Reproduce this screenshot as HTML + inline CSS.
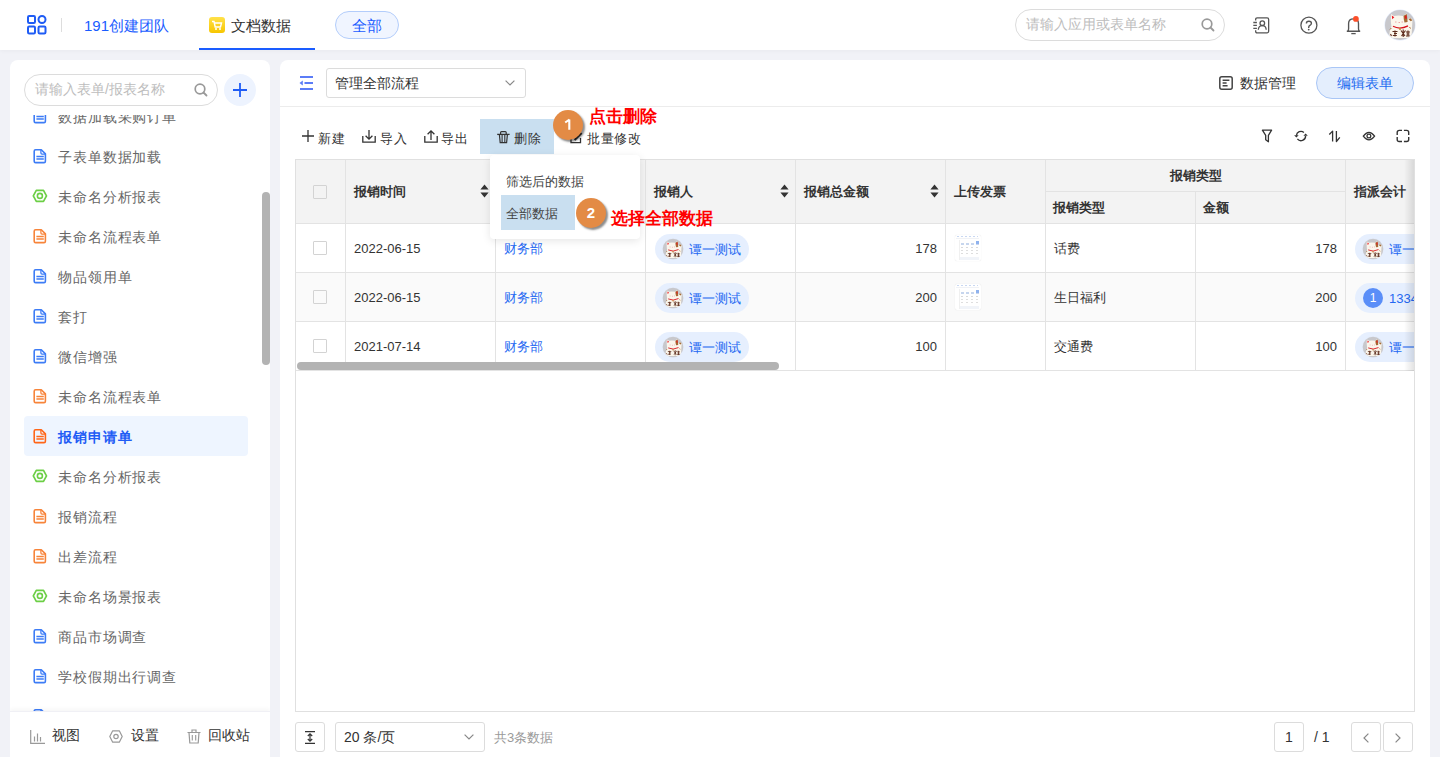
<!DOCTYPE html>
<html><head><meta charset="utf-8">
<style>
*{box-sizing:border-box;margin:0;padding:0}
html,body{width:1440px;height:757px;overflow:hidden}
body{position:relative;background:#f1f2f7;font-family:"Liberation Sans",sans-serif;color:#333;font-size:14px}
.abs{position:absolute}
.t{position:absolute;white-space:nowrap;line-height:1}
svg{position:absolute;overflow:visible}
/* header */
#hdr{position:absolute;left:0;top:0;width:1440px;height:50px;background:#fff;box-shadow:0 1px 4px rgba(0,0,0,.04)}
/* sidebar */
#side{position:absolute;left:10px;top:60px;width:260px;height:697px;background:#fff;border-radius:8px 8px 0 0;overflow:hidden}
.item{position:absolute;left:14px;width:224px;height:40px}
.item .tx{position:absolute;left:34px;top:13px;font-size:14px;letter-spacing:0.9px;line-height:16px;color:#666;white-space:nowrap}
.item svg{left:9px;top:13px}
/* main */
#main{position:absolute;left:280px;top:60px;width:1150px;height:697px;background:#fff;border-radius:8px 8px 0 0}
.cell{position:absolute;border-right:1px solid #e3e3e3;border-bottom:1px solid #e3e3e3;overflow:hidden}
.circ{width:30px;height:30px;border-radius:50%;background:#e38b45;color:#fff;font-weight:bold;font-size:15px;line-height:30px;text-align:center;box-shadow:2px 2px 2px rgba(0,0,0,.45)}
.red{color:#f00;font-size:16.5px;font-weight:bold}
.tag{width:94px;height:30px;border-radius:15px;background:#e6effe}
.av{width:20px;height:20px;border-radius:50%;background:radial-gradient(circle at 50% 45%,#f4ede6 0 45%,#c9a98d 46% 60%,#bdbdbd 61%)}
.thumb{width:26px;height:26px;border-radius:2px;background:#fff;box-shadow:0 0 1px rgba(0,0,0,.15);overflow:hidden}
.hd{font-weight:bold;font-size:13px;color:#333}
</style></head><body>
<svg width="0" height="0" style="position:absolute"><defs>
<clipPath id="avc"><circle cx="16" cy="16" r="15"/></clipPath>
<symbol id="cat" viewBox="0 0 32 32">
    <circle cx="16" cy="16" r="15.6" fill="#e3ebfb"/>
    <circle cx="16" cy="16" r="15" fill="#c8c8cc"/>
    <g clip-path="url(#avc)">
    <path d="M7 5 L10 7 Q14.5 6 19 7 L22.5 4.5 L23.5 12 L24 10 L26.5 9 L28.5 11 L28 19 L27.5 29 L5.5 29 Q5 22 7.5 17.5 Q6.5 13 7 5 Z" fill="#fbf6ec"/>
    <path d="M7.8 6.5 L10.3 8.2 L8.2 10.3 Z" fill="#ec1c24"/>
    <path d="M19.5 6.8 L22.8 5 L23.6 13 L20.5 13.5 Q19.5 10 19.5 6.8 Z" fill="#a46a34"/>
    <path d="M20.8 7.3 L22.4 6.3 L22.8 10 L21 9.2 Z" fill="#e8141e"/>
    <path d="M24.5 10.2 L26.5 9.2 L28.3 11.2 L26.8 12.3 Z" fill="#a46a34"/>
    <path d="M9 17.3 Q16 21 24 16.8" fill="none" stroke="#d8121c" stroke-width="1.3"/>
    <rect x="15.2" y="18.8" width="1.6" height="2.2" fill="#c08a3a"/>
    <path d="M11 13 H12.5 M14.5 13.5 H16 M17.5 13 H19" stroke="#e9a0a0" stroke-width="0.9"/>
    <path d="M8.5 22.5 H13.5 M10 24.5 H13 M8.8 26.5 L12.8 26.5 M11 21.5 V27.5 M6.5 25 L7.5 27" stroke="#5b2a1c" stroke-width="1.1"/>
    <path d="M17 21.5 L21 27 M21.5 21.5 L17.5 27 M19.2 20.5 V28 M22 23 H26 M22.5 25 H25.5 M22 27 H26 M24 21.5 V27.5" stroke="#5b2a1c" stroke-width="1.1"/>
    <path d="M6 20.5 L7.3 19 M26.5 19.5 L25.5 18" stroke="#a46a34" stroke-width="1"/>
    </g>
</symbol>
</defs></svg>

<div id="hdr">
  <!-- grid icon -->
  <svg style="left:27px;top:15px" width="20" height="20" viewBox="0 0 20 20">
    <rect x="1" y="1" width="7" height="7" rx="1.2" fill="none" stroke="#1f5cf5" stroke-width="2"/>
    <rect x="11.5" y="1" width="7" height="7" rx="3.5" fill="none" stroke="#1f5cf5" stroke-width="2"/>
    <rect x="1" y="11.5" width="7" height="7" rx="1.2" fill="none" stroke="#1f5cf5" stroke-width="2"/>
    <rect x="11.5" y="11.5" width="7" height="7" rx="1.2" fill="none" stroke="#1f5cf5" stroke-width="2"/>
  </svg>
  <div class="abs" style="left:61px;top:18px;width:1px;height:14px;background:#ddd"></div>
  <div class="t" style="left:84px;top:18px;font-size:15px;color:#1a5cff">191创建团队</div>
  <!-- tab -->
  <div class="abs" style="left:209px;top:17px;width:16px;height:16px;border-radius:3px;background:linear-gradient(#ffe14a,#f7c600)"></div>
  <svg style="left:211px;top:20px" width="12" height="11" viewBox="0 0 12 11">
    <path d="M1 1.5 L3 1.5 L4.2 7 L9.5 7 L10.5 3 L3.6 3" fill="none" stroke="#fff" stroke-width="1.4"/>
    <circle cx="5" cy="9" r="1" fill="#fff"/><circle cx="9" cy="9" r="1" fill="#fff"/>
  </svg>
  <div class="t" style="left:231px;top:18px;font-size:15px;color:#333">文档数据</div>
  <div class="abs" style="left:199px;top:48px;width:116px;height:2px;background:#1a5cff"></div>
  <div class="abs" style="left:335px;top:11px;width:64px;height:28px;border-radius:14px;background:#f0f5ff;border:1px solid #b3cdfb"></div>
  <div class="t" style="left:352px;top:18px;font-size:15px;color:#1a5cff">全部</div>
  <!-- search -->
  <div class="abs" style="left:1015px;top:9px;width:210px;height:32px;border-radius:16px;border:1px solid #dcdcdc"></div>
  <div class="t" style="left:1026px;top:17px;font-size:14px;color:#bdbdbd">请输入应用或表单名称</div>
  <svg style="left:1201px;top:18px" width="14" height="14" viewBox="0 0 14 14">
    <circle cx="6" cy="6" r="4.8" fill="none" stroke="#999" stroke-width="1.7"/>
    <path d="M9.5 9.5 L12.5 12.5" stroke="#999" stroke-width="1.8" stroke-linecap="round"/>
  </svg>
  <!-- contacts icon -->
  <svg style="left:1253px;top:16px" width="18" height="18" viewBox="0 0 18 18">
    <path d="M2.65 4.6 V3.45 Q2.65 1.95 4.15 1.95 H14.15 Q15.65 1.95 15.65 3.45 V15.35 Q15.65 16.85 14.15 16.85 H4.15 Q2.65 16.85 2.65 15.35 V14.2" fill="none" stroke="#555" stroke-width="1.3"/>
    <path d="M0.3 6.5 H3.9 M0.3 9.4 H3.9 M0.3 12.3 H3.9" stroke="#555" stroke-width="1.3"/>
    <circle cx="9.3" cy="7.2" r="2.3" fill="none" stroke="#555" stroke-width="1.3"/>
    <path d="M5.3 13.8 Q5.6 9.7 9.3 9.7 Q13 9.7 13.2 13.8" fill="none" stroke="#555" stroke-width="1.3"/>
  </svg>
  <!-- question -->
  <svg style="left:1300px;top:16px" width="18" height="18" viewBox="0 0 18 18">
    <circle cx="8.9" cy="9.2" r="8" fill="none" stroke="#555" stroke-width="1.3"/>
    <path d="M6.4 7.4 Q6.4 5.3 8.9 5.3 Q11.4 5.3 11.4 7.2 Q11.4 8.6 9.9 9.4 Q8.7 10.1 8.7 11.4 V12" fill="none" stroke="#555" stroke-width="1.4"/>
    <circle cx="8.7" cy="13.6" r="0.9" fill="#555"/>
  </svg>
  <!-- bell -->
  <svg style="left:1346px;top:15px" width="16" height="20" viewBox="0 0 16 20">
    <path d="M0.8 16.2 H14.2 M1.8 16.2 Q2.6 15.3 2.6 13.8 V8.6 Q2.6 3.9 7.5 3.9 Q12.5 3.9 12.5 8.6 V13.8 Q12.5 15.3 13.3 16.2" fill="none" stroke="#555" stroke-width="1.35"/>
    <path d="M5.3 18.6 H9.7" stroke="#555" stroke-width="1.3"/>
    <circle cx="9.9" cy="3.9" r="2.9" fill="#fb4f2a"/>
  </svg>
  <!-- avatar -->
  <svg style="left:1384px;top:9px" width="32" height="32" viewBox="0 0 32 32"><use href="#cat"/></svg>
</div>

<!-- SIDEBAR -->
<div id="side">
  <div class="abs" style="left:14px;top:14px;width:194px;height:32px;border-radius:16px;border:1px solid #dcdcdc"></div>
  <div class="t" style="left:25px;top:22px;font-size:14px;color:#bdbdbd">请输入表单/报表名称</div>
  <svg style="left:184px;top:23px" width="14" height="14" viewBox="0 0 14 14">
    <circle cx="6" cy="6" r="4.8" fill="none" stroke="#999" stroke-width="1.7"/>
    <path d="M9.5 9.5 L12.5 12.5" stroke="#999" stroke-width="1.8" stroke-linecap="round"/>
  </svg>
  <div class="abs" style="left:214px;top:14px;width:32px;height:32px;border-radius:50%;background:#edf3fe"></div>
  <svg style="left:222px;top:22px" width="16" height="16" viewBox="0 0 16 16">
    <path d="M8 1 V15 M1 8 H15" stroke="#1f5cf5" stroke-width="1.8"/>
  </svg>
  <div id="list" class="abs" style="left:0;top:55px;width:260px;height:596px;overflow:hidden">
    <div class="item" style="top:-19px"><svg width="14" height="15" viewBox="0 0 14 15"><path d="M1.2 2.2 Q1.2 0.8 2.6 0.8 H8.3 L12.4 4.9 V12.2 Q12.4 13.6 11 13.6 H2.6 Q1.2 13.6 1.2 12.2 Z" fill="none" stroke="#3d7cf6" stroke-width="1.6" stroke-linejoin="round"/><path d="M7.9 1 V4 Q7.9 5.1 9 5.1 H12.2" fill="none" stroke="#3d7cf6" stroke-width="1.3"/><path d="M3.4 7.6 H10.8 M3.4 10.1 H10.8" stroke="#3d7cf6" stroke-width="1.5"/></svg><div class="tx">数据加载采购订单</div></div>
    <div class="item" style="top:21px"><svg width="14" height="15" viewBox="0 0 14 15"><path d="M1.2 2.2 Q1.2 0.8 2.6 0.8 H8.3 L12.4 4.9 V12.2 Q12.4 13.6 11 13.6 H2.6 Q1.2 13.6 1.2 12.2 Z" fill="none" stroke="#3d7cf6" stroke-width="1.6" stroke-linejoin="round"/><path d="M7.9 1 V4 Q7.9 5.1 9 5.1 H12.2" fill="none" stroke="#3d7cf6" stroke-width="1.3"/><path d="M3.4 7.6 H10.8 M3.4 10.1 H10.8" stroke="#3d7cf6" stroke-width="1.5"/></svg><div class="tx">子表单数据加载</div></div>
    <div class="item" style="top:61px"><svg style="left:8px" width="16" height="14" viewBox="0 0 16 14"><path d="M1.3 6.9 L4.3 1.45 H11.5 L14.5 6.9 L11.5 12.4 H4.3 Z" fill="none" stroke="#6ccf46" stroke-width="1.7" stroke-linejoin="round"/><circle cx="7.9" cy="6.9" r="2.5" fill="none" stroke="#6ccf46" stroke-width="1.6"/></svg><div class="tx">未命名分析报表</div></div>
    <div class="item" style="top:101px"><svg width="14" height="15" viewBox="0 0 14 15"><path d="M1.2 2.2 Q1.2 0.8 2.6 0.8 H8.3 L12.4 4.9 V12.2 Q12.4 13.6 11 13.6 H2.6 Q1.2 13.6 1.2 12.2 Z" fill="none" stroke="#f7843a" stroke-width="1.6" stroke-linejoin="round"/><path d="M7.9 1 V4 Q7.9 5.1 9 5.1 H12.2" fill="none" stroke="#f7843a" stroke-width="1.3"/><path d="M3.4 7.6 H10.8 M3.4 10.1 H10.8" stroke="#f7843a" stroke-width="1.5"/></svg><div class="tx">未命名流程表单</div></div>
    <div class="item" style="top:141px"><svg width="14" height="15" viewBox="0 0 14 15"><path d="M1.2 2.2 Q1.2 0.8 2.6 0.8 H8.3 L12.4 4.9 V12.2 Q12.4 13.6 11 13.6 H2.6 Q1.2 13.6 1.2 12.2 Z" fill="none" stroke="#3d7cf6" stroke-width="1.6" stroke-linejoin="round"/><path d="M7.9 1 V4 Q7.9 5.1 9 5.1 H12.2" fill="none" stroke="#3d7cf6" stroke-width="1.3"/><path d="M3.4 7.6 H10.8 M3.4 10.1 H10.8" stroke="#3d7cf6" stroke-width="1.5"/></svg><div class="tx">物品领用单</div></div>
    <div class="item" style="top:181px"><svg width="14" height="15" viewBox="0 0 14 15"><path d="M1.2 2.2 Q1.2 0.8 2.6 0.8 H8.3 L12.4 4.9 V12.2 Q12.4 13.6 11 13.6 H2.6 Q1.2 13.6 1.2 12.2 Z" fill="none" stroke="#3d7cf6" stroke-width="1.6" stroke-linejoin="round"/><path d="M7.9 1 V4 Q7.9 5.1 9 5.1 H12.2" fill="none" stroke="#3d7cf6" stroke-width="1.3"/><path d="M3.4 7.6 H10.8 M3.4 10.1 H10.8" stroke="#3d7cf6" stroke-width="1.5"/></svg><div class="tx">套打</div></div>
    <div class="item" style="top:221px"><svg width="14" height="15" viewBox="0 0 14 15"><path d="M1.2 2.2 Q1.2 0.8 2.6 0.8 H8.3 L12.4 4.9 V12.2 Q12.4 13.6 11 13.6 H2.6 Q1.2 13.6 1.2 12.2 Z" fill="none" stroke="#3d7cf6" stroke-width="1.6" stroke-linejoin="round"/><path d="M7.9 1 V4 Q7.9 5.1 9 5.1 H12.2" fill="none" stroke="#3d7cf6" stroke-width="1.3"/><path d="M3.4 7.6 H10.8 M3.4 10.1 H10.8" stroke="#3d7cf6" stroke-width="1.5"/></svg><div class="tx">微信增强</div></div>
    <div class="item" style="top:261px"><svg width="14" height="15" viewBox="0 0 14 15"><path d="M1.2 2.2 Q1.2 0.8 2.6 0.8 H8.3 L12.4 4.9 V12.2 Q12.4 13.6 11 13.6 H2.6 Q1.2 13.6 1.2 12.2 Z" fill="none" stroke="#f7843a" stroke-width="1.6" stroke-linejoin="round"/><path d="M7.9 1 V4 Q7.9 5.1 9 5.1 H12.2" fill="none" stroke="#f7843a" stroke-width="1.3"/><path d="M3.4 7.6 H10.8 M3.4 10.1 H10.8" stroke="#f7843a" stroke-width="1.5"/></svg><div class="tx">未命名流程表单</div></div>
    <div class="item" style="top:301px;background:#eef5ff;border-radius:4px"><svg width="14" height="15" viewBox="0 0 14 15"><path d="M1.2 2.2 Q1.2 0.8 2.6 0.8 H8.3 L12.4 4.9 V12.2 Q12.4 13.6 11 13.6 H2.6 Q1.2 13.6 1.2 12.2 Z" fill="none" stroke="#ff6619" stroke-width="1.6" stroke-linejoin="round"/><path d="M7.9 1 V4 Q7.9 5.1 9 5.1 H12.2" fill="none" stroke="#ff6619" stroke-width="1.3"/><path d="M3.4 7.6 H10.8 M3.4 10.1 H10.8" stroke="#ff6619" stroke-width="1.5"/></svg><div class="tx" style="color:#1f5cf5;font-weight:bold">报销申请单</div></div>
    <div class="item" style="top:341px"><svg style="left:8px" width="16" height="14" viewBox="0 0 16 14"><path d="M1.3 6.9 L4.3 1.45 H11.5 L14.5 6.9 L11.5 12.4 H4.3 Z" fill="none" stroke="#6ccf46" stroke-width="1.7" stroke-linejoin="round"/><circle cx="7.9" cy="6.9" r="2.5" fill="none" stroke="#6ccf46" stroke-width="1.6"/></svg><div class="tx">未命名分析报表</div></div>
    <div class="item" style="top:381px"><svg width="14" height="15" viewBox="0 0 14 15"><path d="M1.2 2.2 Q1.2 0.8 2.6 0.8 H8.3 L12.4 4.9 V12.2 Q12.4 13.6 11 13.6 H2.6 Q1.2 13.6 1.2 12.2 Z" fill="none" stroke="#f7843a" stroke-width="1.6" stroke-linejoin="round"/><path d="M7.9 1 V4 Q7.9 5.1 9 5.1 H12.2" fill="none" stroke="#f7843a" stroke-width="1.3"/><path d="M3.4 7.6 H10.8 M3.4 10.1 H10.8" stroke="#f7843a" stroke-width="1.5"/></svg><div class="tx">报销流程</div></div>
    <div class="item" style="top:421px"><svg width="14" height="15" viewBox="0 0 14 15"><path d="M1.2 2.2 Q1.2 0.8 2.6 0.8 H8.3 L12.4 4.9 V12.2 Q12.4 13.6 11 13.6 H2.6 Q1.2 13.6 1.2 12.2 Z" fill="none" stroke="#f7843a" stroke-width="1.6" stroke-linejoin="round"/><path d="M7.9 1 V4 Q7.9 5.1 9 5.1 H12.2" fill="none" stroke="#f7843a" stroke-width="1.3"/><path d="M3.4 7.6 H10.8 M3.4 10.1 H10.8" stroke="#f7843a" stroke-width="1.5"/></svg><div class="tx">出差流程</div></div>
    <div class="item" style="top:461px"><svg style="left:8px" width="16" height="14" viewBox="0 0 16 14"><path d="M1.3 6.9 L4.3 1.45 H11.5 L14.5 6.9 L11.5 12.4 H4.3 Z" fill="none" stroke="#6ccf46" stroke-width="1.7" stroke-linejoin="round"/><circle cx="7.9" cy="6.9" r="2.5" fill="none" stroke="#6ccf46" stroke-width="1.6"/></svg><div class="tx">未命名场景报表</div></div>
    <div class="item" style="top:501px"><svg width="14" height="15" viewBox="0 0 14 15"><path d="M1.2 2.2 Q1.2 0.8 2.6 0.8 H8.3 L12.4 4.9 V12.2 Q12.4 13.6 11 13.6 H2.6 Q1.2 13.6 1.2 12.2 Z" fill="none" stroke="#3d7cf6" stroke-width="1.6" stroke-linejoin="round"/><path d="M7.9 1 V4 Q7.9 5.1 9 5.1 H12.2" fill="none" stroke="#3d7cf6" stroke-width="1.3"/><path d="M3.4 7.6 H10.8 M3.4 10.1 H10.8" stroke="#3d7cf6" stroke-width="1.5"/></svg><div class="tx">商品市场调查</div></div>
    <div class="item" style="top:541px"><svg width="14" height="15" viewBox="0 0 14 15"><path d="M1.2 2.2 Q1.2 0.8 2.6 0.8 H8.3 L12.4 4.9 V12.2 Q12.4 13.6 11 13.6 H2.6 Q1.2 13.6 1.2 12.2 Z" fill="none" stroke="#3d7cf6" stroke-width="1.6" stroke-linejoin="round"/><path d="M7.9 1 V4 Q7.9 5.1 9 5.1 H12.2" fill="none" stroke="#3d7cf6" stroke-width="1.3"/><path d="M3.4 7.6 H10.8 M3.4 10.1 H10.8" stroke="#3d7cf6" stroke-width="1.5"/></svg><div class="tx">学校假期出行调查</div></div>
    <div class="item" style="top:581px"><svg width="14" height="15" viewBox="0 0 14 15"><path d="M1.2 2.2 Q1.2 0.8 2.6 0.8 H8.3 L12.4 4.9 V12.2 Q12.4 13.6 11 13.6 H2.6 Q1.2 13.6 1.2 12.2 Z" fill="none" stroke="#3d7cf6" stroke-width="1.6" stroke-linejoin="round"/><path d="M7.9 1 V4 Q7.9 5.1 9 5.1 H12.2" fill="none" stroke="#3d7cf6" stroke-width="1.3"/><path d="M3.4 7.6 H10.8 M3.4 10.1 H10.8" stroke="#3d7cf6" stroke-width="1.5"/></svg></div>
  </div>
  <div class="abs" style="left:252px;top:132px;width:8px;height:173px;border-radius:4px;background:#b3b3b3"></div>
  <!-- bottom bar -->
  <div class="abs" style="left:0;top:651px;width:260px;height:46px;background:#fff;box-shadow:0 -2px 4px rgba(0,0,0,.04);border-top:1px solid #f0f0f5">
    <svg style="left:20px;top:18px" width="15" height="14" viewBox="0 0 15 14"><path d="M0.7 0 V13.3 H15" fill="none" stroke="#999" stroke-width="1.2"/><path d="M4.5 6.5 V11.5 M7.5 3.5 V11.5 M10.5 7 V11.5" stroke="#999" stroke-width="1.2"/></svg>
    <div class="t" style="left:42px;top:16px;font-size:14px;color:#333">视图</div>
    <svg style="left:99px;top:18px" width="14" height="13" viewBox="0 0 14 13"><path d="M3.7 0.8 H10.3 L13.2 6.5 L10.3 12.2 H3.7 L0.8 6.5 Z" fill="none" stroke="#999" stroke-width="1.2" stroke-linejoin="round"/><circle cx="7" cy="6.5" r="2.2" fill="none" stroke="#999" stroke-width="1.2"/></svg>
    <div class="t" style="left:121px;top:16px;font-size:14px;color:#333">设置</div>
    <svg style="left:177px;top:17px" width="14" height="15" viewBox="0 0 14 15"><path d="M0.5 3.5 H13.5 M5 3.3 V1 H9 V3.3" fill="none" stroke="#999" stroke-width="1.2"/><path d="M2 3.5 L2.8 14 H11.2 L12 3.5" fill="none" stroke="#999" stroke-width="1.2"/><path d="M5.3 6 V11.5 M8.7 6 V11.5" stroke="#999" stroke-width="1.1"/></svg>
    <div class="t" style="left:198px;top:16px;font-size:14px;color:#333">回收站</div>
  </div>
</div>

<!-- MAIN -->
<div id="main">
  <!-- title bar -->
  <svg style="left:19px;top:16px" width="15" height="14" viewBox="0 0 15 14"><path d="M1 1 H14 M5.5 7 H14 M1 13 H14" stroke="#5b7cf7" stroke-width="1.8"/><path d="M0.5 7 L3.8 4.6 V9.4 Z" fill="#5b7cf7"/></svg>
  <div class="abs" style="left:46px;top:8px;width:200px;height:30px;border:1px solid #dcdcdc;border-radius:3px"></div>
  <div class="t" style="left:55px;top:16px;font-size:14px;color:#333">管理全部流程</div>
  <svg style="left:225px;top:20px" width="10" height="6" viewBox="0 0 10 6"><path d="M0.6 0.6 L5 5 L9.4 0.6" fill="none" stroke="#888" stroke-width="1.2"/></svg>
  <svg style="left:939px;top:16px" width="14" height="14" viewBox="0 0 14 14"><rect x="0.8" y="0.8" width="12.4" height="12.4" rx="2" fill="none" stroke="#444" stroke-width="1.5"/><path d="M3.6 4.3 H10.4 M3.6 7 H7.6 M3.6 9.7 H8.6" stroke="#444" stroke-width="1.4"/></svg>
  <div class="t" style="left:960px;top:16px;font-size:14px;color:#333">数据管理</div>
  <div class="abs" style="left:1036px;top:7px;width:98px;height:32px;border-radius:16px;background:#e4eefd;border:1px solid #a9c6f6"></div>
  <div class="t" style="left:1057px;top:16px;font-size:14px;color:#1d6cf0">编辑表单</div>
  <div class="abs" style="left:0;top:46px;width:1150px;height:1px;background:#ececec"></div>

  <!-- toolbar -->
  <svg style="left:22px;top:70px" width="12" height="12" viewBox="0 0 12 12"><path d="M6 0 V12 M0 6 H12" stroke="#333" stroke-width="1.3"/></svg>
  <div class="t" style="left:38px;top:72px;font-size:13px;color:#333;letter-spacing:0.6px">新建</div>
  <svg style="left:82px;top:70px" width="14" height="13" viewBox="0 0 14 13"><path d="M0.8 6 V12.2 H13.2 V6" fill="none" stroke="#333" stroke-width="1.3"/><path d="M7 0 V9 M3.6 5.8 L7 9.2 L10.4 5.8" fill="none" stroke="#333" stroke-width="1.3"/></svg>
  <div class="t" style="left:100px;top:72px;font-size:13px;color:#333;letter-spacing:0.6px">导入</div>
  <svg style="left:144px;top:70px" width="14" height="13" viewBox="0 0 14 13"><path d="M0.8 6 V12.2 H13.2 V6" fill="none" stroke="#333" stroke-width="1.3"/><path d="M7 10 V1 M3.6 4.2 L7 0.8 L10.4 4.2" fill="none" stroke="#333" stroke-width="1.3"/></svg>
  <div class="t" style="left:161px;top:72px;font-size:13px;color:#333;letter-spacing:0.6px">导出</div>
  <div class="abs" style="left:200px;top:59px;width:74px;height:35px;background:#c9dff0"></div>
  <svg style="left:217px;top:71px" width="13" height="13" viewBox="0 0 13 13"><path d="M3.6 3.4 V1.6 Q3.6 0.7 4.5 0.7 H8.3 Q9.2 0.7 9.2 1.6 V3.4" fill="none" stroke="#333" stroke-width="1.2"/><path d="M0.2 3.4 H12.6" stroke="#333" stroke-width="1.3"/><path d="M2.4 3.6 L3.2 11.7 H9.6 L10.4 3.6" fill="none" stroke="#333" stroke-width="1.2"/><path d="M5.1 4 V11.2 M7.8 4 V11.2" stroke="#333" stroke-width="1.1"/></svg>
  <div class="t" style="left:234px;top:72px;font-size:13px;color:#333;letter-spacing:0.6px">删除</div>
  <svg style="left:290px;top:71px" width="13" height="13" viewBox="0 0 13 13"><path d="M1 1.5 H6 M1 1.5 V11.6 H10.5 V7" fill="none" stroke="#333" stroke-width="1.3"/><path d="M4.6 9 L11.6 2" stroke="#333" stroke-width="2"/></svg>
  <div class="t" style="left:307px;top:72px;font-size:13px;color:#333;letter-spacing:0.6px">批量修改</div>

  <!-- right icons -->
  <svg style="left:981px;top:69px" width="12" height="14" viewBox="0 0 12 14"><path d="M1.4 1.2 H10.6 L7.4 6.3 V12.8 L4.7 10.8 V6.3 Z" fill="none" stroke="#333" stroke-width="1.3" stroke-linejoin="round"/></svg>
  <svg style="left:1013px;top:70px" width="16" height="12" viewBox="0 0 16 12"><path d="M3.4 5.6 A4.6 4.6 0 0 1 10.9 2.4 M4.4 8.9 A4.6 4.6 0 0 0 12.6 6" fill="none" stroke="#333" stroke-width="1.35"/><path d="M1.1 5.2 L5.7 5.2 L3.4 7.5 Z M10.4 5.7 L14.8 5.7 L12.6 3.5 Z" fill="#333"/></svg>
  <svg style="left:1048px;top:70px" width="13" height="13" viewBox="0 0 13 13"><path d="M4.6 11.5 V1.1 L1.3 4.5 M8.4 1 V11.5 L11.8 7.3" fill="none" stroke="#333" stroke-width="1.3" stroke-linejoin="round"/></svg>
  <svg style="left:1082px;top:71px" width="14" height="10" viewBox="0 0 14 10"><path d="M1.3 5.1 Q6.95 -2.5 12.6 5.1 Q6.95 12.7 1.3 5.1 Z" fill="none" stroke="#333" stroke-width="1.25"/><circle cx="6.9" cy="4.9" r="1.9" fill="none" stroke="#333" stroke-width="1.25"/></svg>
  <svg style="left:1116px;top:69px" width="14" height="14" viewBox="0 0 14 14"><path d="M1.2 6 V3.4 Q1.2 1.4 3.2 1.4 H6 M7.9 1.4 H10.7 Q12.7 1.4 12.7 3.4 V6 M12.7 8.1 V10.5 Q12.7 12.5 10.7 12.5 H7.9 M6 12.5 H3.2 Q1.2 12.5 1.2 10.5 V8.1" fill="none" stroke="#333" stroke-width="1.4"/></svg>

  <!-- table container -->
  <div id="tbl" class="abs" style="left:15px;top:99px;width:1120px;height:553px;border:1px solid #e0e0e0;overflow:hidden">
<div class="cell" style="left:0px;top:0px;width:50px;height:64px;background:#f3f3f3"><div class="abs" style="left:17px;top:25px;width:14px;height:14px;border:1px solid #d3d3d3;border-radius:1px"></div></div>
<div class="cell" style="left:50px;top:0px;width:150px;height:64px;background:#f3f3f3"><div class="t hd" style="left:8px;top:25px">报销时间</div><svg style="right:6px;top:24px" width="9" height="14" viewBox="0 0 9 14"><path d="M4.5 0.5 L8.6 5.4 H0.4 Z M4.5 13.5 L8.6 8.6 H0.4 Z" fill="#333"/></svg></div>
<div class="cell" style="left:200px;top:0px;width:150px;height:64px;background:#f3f3f3"><div class="t hd" style="left:8px;top:25px">报销部门</div><svg style="right:6px;top:24px" width="9" height="14" viewBox="0 0 9 14"><path d="M4.5 0.5 L8.6 5.4 H0.4 Z M4.5 13.5 L8.6 8.6 H0.4 Z" fill="#333"/></svg></div>
<div class="cell" style="left:350px;top:0px;width:150px;height:64px;background:#f3f3f3"><div class="t hd" style="left:8px;top:25px">报销人</div><svg style="right:6px;top:24px" width="9" height="14" viewBox="0 0 9 14"><path d="M4.5 0.5 L8.6 5.4 H0.4 Z M4.5 13.5 L8.6 8.6 H0.4 Z" fill="#333"/></svg></div>
<div class="cell" style="left:500px;top:0px;width:150px;height:64px;background:#f3f3f3"><div class="t hd" style="left:8px;top:25px">报销总金额</div><svg style="right:6px;top:24px" width="9" height="14" viewBox="0 0 9 14"><path d="M4.5 0.5 L8.6 5.4 H0.4 Z M4.5 13.5 L8.6 8.6 H0.4 Z" fill="#333"/></svg></div>
<div class="cell" style="left:650px;top:0px;width:100px;height:64px;background:#f3f3f3"><div class="t hd" style="left:8px;top:25px">上传发票</div></div>
<div class="cell" style="left:750px;top:0px;width:300px;height:32px;background:#f3f3f3"><div class="t hd" style="left:124px;top:9px">报销类型</div></div>
<div class="cell" style="left:750px;top:32px;width:150px;height:32px;background:#f3f3f3"><div class="t hd" style="left:7px;top:9px">报销类型</div></div>
<div class="cell" style="left:900px;top:32px;width:150px;height:32px;background:#f3f3f3"><div class="t hd" style="left:7px;top:9px">金额</div></div>
<div class="cell" style="left:1050px;top:0px;width:150px;height:64px;background:#f3f3f3"><div class="t hd" style="left:8px;top:25px">指派会计</div></div>
<div class="cell" style="left:0px;top:64px;width:50px;height:49px;background:#fff"><div class="abs" style="left:17px;top:17px;width:14px;height:14px;border:1px solid #d3d3d3;border-radius:1px"></div></div>
<div class="cell" style="left:50px;top:64px;width:150px;height:49px;background:#fff"><div class="t" style="left:8px;top:18px;font-size:13px;color:#333">2022-06-15</div></div>
<div class="cell" style="left:200px;top:64px;width:150px;height:49px;background:#fff"><div class="t" style="left:8px;top:18px;font-size:13px;color:#2468f2">财务部</div></div>
<div class="cell" style="left:350px;top:64px;width:150px;height:49px;background:#fff"><div class="abs tag" style="left:9px;top:10px"><svg style="left:7px;top:4px" width="22" height="22" viewBox="0 0 32 32"><use href="#cat"/></svg><div class="t" style="left:34px;top:9px;font-size:13px;color:#2468f2">谭一测试</div></div></div>
<div class="cell" style="left:500px;top:64px;width:150px;height:49px;background:#fff"><div class="t" style="right:8px;top:18px;font-size:13px;color:#333">178</div></div>
<div class="cell" style="left:650px;top:64px;width:100px;height:49px;background:#fff"><div class="abs thumb" style="left:9px;top:11px"><div class="abs" style="left:2px;top:1px;width:21px;height:1px;background:repeating-linear-gradient(to right,#c9d8f2 0 2px,#fff 2px 4px)"></div><div class="abs" style="left:1px;top:3px;width:23px;height:1px;background:#f0f2f6"></div><div class="abs" style="left:4px;top:5px;width:1px;height:20px;background:#f0f0f0"></div><div class="abs" style="left:6px;top:8px;width:18px;height:2px;background:repeating-linear-gradient(to right,#c7d6ee 0 3px,#fff 3px 5px)"></div><div class="abs" style="left:6px;top:12px;width:18px;height:1px;background:repeating-linear-gradient(to right,#d9d9d9 0 2px,#fff 2px 5px)"></div><div class="abs" style="left:6px;top:15px;width:18px;height:1px;background:repeating-linear-gradient(to right,#dedede 0 2px,#fff 2px 5px)"></div><div class="abs" style="left:6px;top:18px;width:18px;height:1px;background:repeating-linear-gradient(to right,#dedede 0 2px,#fff 2px 5px)"></div><div class="abs" style="left:21px;top:6px;width:3px;height:3px;background:#8fb2ee"></div><div class="abs" style="left:5px;top:22px;width:19px;height:3px;background:#f1f4f9"></div></div></div>
<div class="cell" style="left:750px;top:64px;width:150px;height:49px;background:#fff"><div class="t" style="left:8px;top:18px;font-size:13px;color:#333">话费</div></div>
<div class="cell" style="left:900px;top:64px;width:150px;height:49px;background:#fff"><div class="t" style="right:8px;top:18px;font-size:13px;color:#333">178</div></div>
<div class="cell" style="left:1050px;top:64px;width:150px;height:49px;background:#fff"><div class="abs tag" style="left:9px;top:10px"><svg style="left:7px;top:4px" width="22" height="22" viewBox="0 0 32 32"><use href="#cat"/></svg><div class="t" style="left:34px;top:9px;font-size:13px;color:#2468f2">谭一测试</div></div></div>
<div class="cell" style="left:0px;top:113px;width:50px;height:49px;background:#fafafa"><div class="abs" style="left:17px;top:17px;width:14px;height:14px;border:1px solid #d3d3d3;border-radius:1px"></div></div>
<div class="cell" style="left:50px;top:113px;width:150px;height:49px;background:#fafafa"><div class="t" style="left:8px;top:18px;font-size:13px;color:#333">2022-06-15</div></div>
<div class="cell" style="left:200px;top:113px;width:150px;height:49px;background:#fafafa"><div class="t" style="left:8px;top:18px;font-size:13px;color:#2468f2">财务部</div></div>
<div class="cell" style="left:350px;top:113px;width:150px;height:49px;background:#fafafa"><div class="abs tag" style="left:9px;top:10px"><svg style="left:7px;top:4px" width="22" height="22" viewBox="0 0 32 32"><use href="#cat"/></svg><div class="t" style="left:34px;top:9px;font-size:13px;color:#2468f2">谭一测试</div></div></div>
<div class="cell" style="left:500px;top:113px;width:150px;height:49px;background:#fafafa"><div class="t" style="right:8px;top:18px;font-size:13px;color:#333">200</div></div>
<div class="cell" style="left:650px;top:113px;width:100px;height:49px;background:#fafafa"><div class="abs thumb" style="left:9px;top:11px"><div class="abs" style="left:2px;top:1px;width:21px;height:1px;background:repeating-linear-gradient(to right,#c9d8f2 0 2px,#fff 2px 4px)"></div><div class="abs" style="left:1px;top:3px;width:23px;height:1px;background:#f0f2f6"></div><div class="abs" style="left:4px;top:5px;width:1px;height:20px;background:#f0f0f0"></div><div class="abs" style="left:6px;top:8px;width:18px;height:2px;background:repeating-linear-gradient(to right,#c7d6ee 0 3px,#fff 3px 5px)"></div><div class="abs" style="left:6px;top:12px;width:18px;height:1px;background:repeating-linear-gradient(to right,#d9d9d9 0 2px,#fff 2px 5px)"></div><div class="abs" style="left:6px;top:15px;width:18px;height:1px;background:repeating-linear-gradient(to right,#dedede 0 2px,#fff 2px 5px)"></div><div class="abs" style="left:6px;top:18px;width:18px;height:1px;background:repeating-linear-gradient(to right,#dedede 0 2px,#fff 2px 5px)"></div><div class="abs" style="left:21px;top:6px;width:3px;height:3px;background:#8fb2ee"></div><div class="abs" style="left:5px;top:22px;width:19px;height:3px;background:#f1f4f9"></div></div></div>
<div class="cell" style="left:750px;top:113px;width:150px;height:49px;background:#fafafa"><div class="t" style="left:8px;top:18px;font-size:13px;color:#333">生日福利</div></div>
<div class="cell" style="left:900px;top:113px;width:150px;height:49px;background:#fafafa"><div class="t" style="right:8px;top:18px;font-size:13px;color:#333">200</div></div>
<div class="cell" style="left:1050px;top:113px;width:150px;height:49px;background:#fafafa"><div class="abs tag" style="left:9px;top:10px"><div class="abs" style="left:8px;top:5px;width:20px;height:20px;border-radius:50%;background:#5a8ef8;color:#fff;font-size:12px;line-height:21px;text-align:center">1</div><div class="t" style="left:34px;top:9px;font-size:13px;color:#2468f2">1334567890</div></div></div>
<div class="cell" style="left:0px;top:162px;width:50px;height:49px;background:#fff"><div class="abs" style="left:17px;top:17px;width:14px;height:14px;border:1px solid #d3d3d3;border-radius:1px"></div></div>
<div class="cell" style="left:50px;top:162px;width:150px;height:49px;background:#fff"><div class="t" style="left:8px;top:18px;font-size:13px;color:#333">2021-07-14</div></div>
<div class="cell" style="left:200px;top:162px;width:150px;height:49px;background:#fff"><div class="t" style="left:8px;top:18px;font-size:13px;color:#2468f2">财务部</div></div>
<div class="cell" style="left:350px;top:162px;width:150px;height:49px;background:#fff"><div class="abs tag" style="left:9px;top:10px"><svg style="left:7px;top:4px" width="22" height="22" viewBox="0 0 32 32"><use href="#cat"/></svg><div class="t" style="left:34px;top:9px;font-size:13px;color:#2468f2">谭一测试</div></div></div>
<div class="cell" style="left:500px;top:162px;width:150px;height:49px;background:#fff"><div class="t" style="right:8px;top:18px;font-size:13px;color:#333">100</div></div>
<div class="cell" style="left:650px;top:162px;width:100px;height:49px;background:#fff"></div>
<div class="cell" style="left:750px;top:162px;width:150px;height:49px;background:#fff"><div class="t" style="left:8px;top:18px;font-size:13px;color:#333">交通费</div></div>
<div class="cell" style="left:900px;top:162px;width:150px;height:49px;background:#fff"><div class="t" style="right:8px;top:18px;font-size:13px;color:#333">100</div></div>
<div class="cell" style="left:1050px;top:162px;width:150px;height:49px;background:#fff"><div class="abs tag" style="left:9px;top:10px"><svg style="left:7px;top:4px" width="22" height="22" viewBox="0 0 32 32"><use href="#cat"/></svg><div class="t" style="left:34px;top:9px;font-size:13px;color:#2468f2">谭一测试</div></div></div>
<div class="abs" style="left:1px;top:202px;width:482px;height:8px;border-radius:4px;background:#b3b3b3"></div>
<div class="abs" style="left:1108px;top:0;width:10px;height:211px;background:linear-gradient(to right,rgba(0,0,0,0),rgba(0,0,0,.11))"></div>
  </div>

  <!-- pagination -->
  <div class="abs" style="left:15px;top:662px;width:30px;height:30px;border:1px solid #dcdcdc;border-radius:3px"></div>
  <svg style="left:24px;top:671px" width="12" height="13" viewBox="0 0 12 13"><path d="M1 0.7 H11 M1 12.3 H11" stroke="#333" stroke-width="1.2"/><path d="M6 3 V10 M3.8 5 L6 2.8 L8.2 5 M3.8 8 L6 10.2 L8.2 8" fill="none" stroke="#333" stroke-width="1.2"/></svg>
  <div class="abs" style="left:55px;top:662px;width:150px;height:30px;border:1px solid #dcdcdc;border-radius:3px"></div>
  <div class="t" style="left:64px;top:670px;font-size:14px;color:#333">20 条/页</div>
  <svg style="left:184px;top:674px" width="10" height="6" viewBox="0 0 10 6"><path d="M0.6 0.6 L5 5 L9.4 0.6" fill="none" stroke="#888" stroke-width="1.2"/></svg>
  <div class="t" style="left:214px;top:671px;font-size:13px;color:#999">共3条数据</div>
  <div class="abs" style="left:994px;top:662px;width:30px;height:30px;border:1px solid #dcdcdc;border-radius:3px"></div>
  <div class="t" style="left:1005px;top:670px;font-size:14px;color:#333">1</div>
  <div class="t" style="left:1034px;top:670px;font-size:14px;color:#333">/ 1</div>
  <div class="abs" style="left:1071px;top:662px;width:30px;height:30px;border:1px solid #dcdcdc;border-radius:3px"></div>
  <svg style="left:1083px;top:673px" width="6" height="10" viewBox="0 0 6 10"><path d="M5.4 0.6 L1 5 L5.4 9.4" fill="none" stroke="#888" stroke-width="1.2"/></svg>
  <div class="abs" style="left:1103px;top:662px;width:30px;height:30px;border:1px solid #dcdcdc;border-radius:3px"></div>
  <svg style="left:1115px;top:673px" width="6" height="10" viewBox="0 0 6 10"><path d="M0.6 0.6 L5 5 L0.6 9.4" fill="none" stroke="#888" stroke-width="1.2"/></svg>
</div>

<!-- dropdown & annotations -->
<div class="abs" style="left:490px;top:155px;width:150px;height:84px;background:#fff;border-radius:4px;box-shadow:0 2px 8px rgba(0,0,0,.10)"></div>
<div class="t" style="left:506px;top:175px;font-size:13px;color:#444">筛选后的数据</div>
<div class="abs" style="left:501px;top:195px;width:74px;height:35px;background:#c9dff0"></div>
<div class="t" style="left:506px;top:207px;font-size:13px;color:#444">全部数据</div>
<div class="abs circ" style="left:553px;top:110px"><svg style="left:0;top:0" width="30" height="30" viewBox="0 0 30 30"><path d="M16.3 9.4 V19.8 M16.5 9.5 L12.2 12.5" fill="none" stroke="#fff" stroke-width="2.1" stroke-linejoin="round"/></svg></div>
<div class="t red" style="left:589px;top:108px">点击删除</div>
<div class="abs circ" style="left:576px;top:198px">2</div>
<div class="t red" style="left:611px;top:210px">选择全部数据</div>
</body></html>
